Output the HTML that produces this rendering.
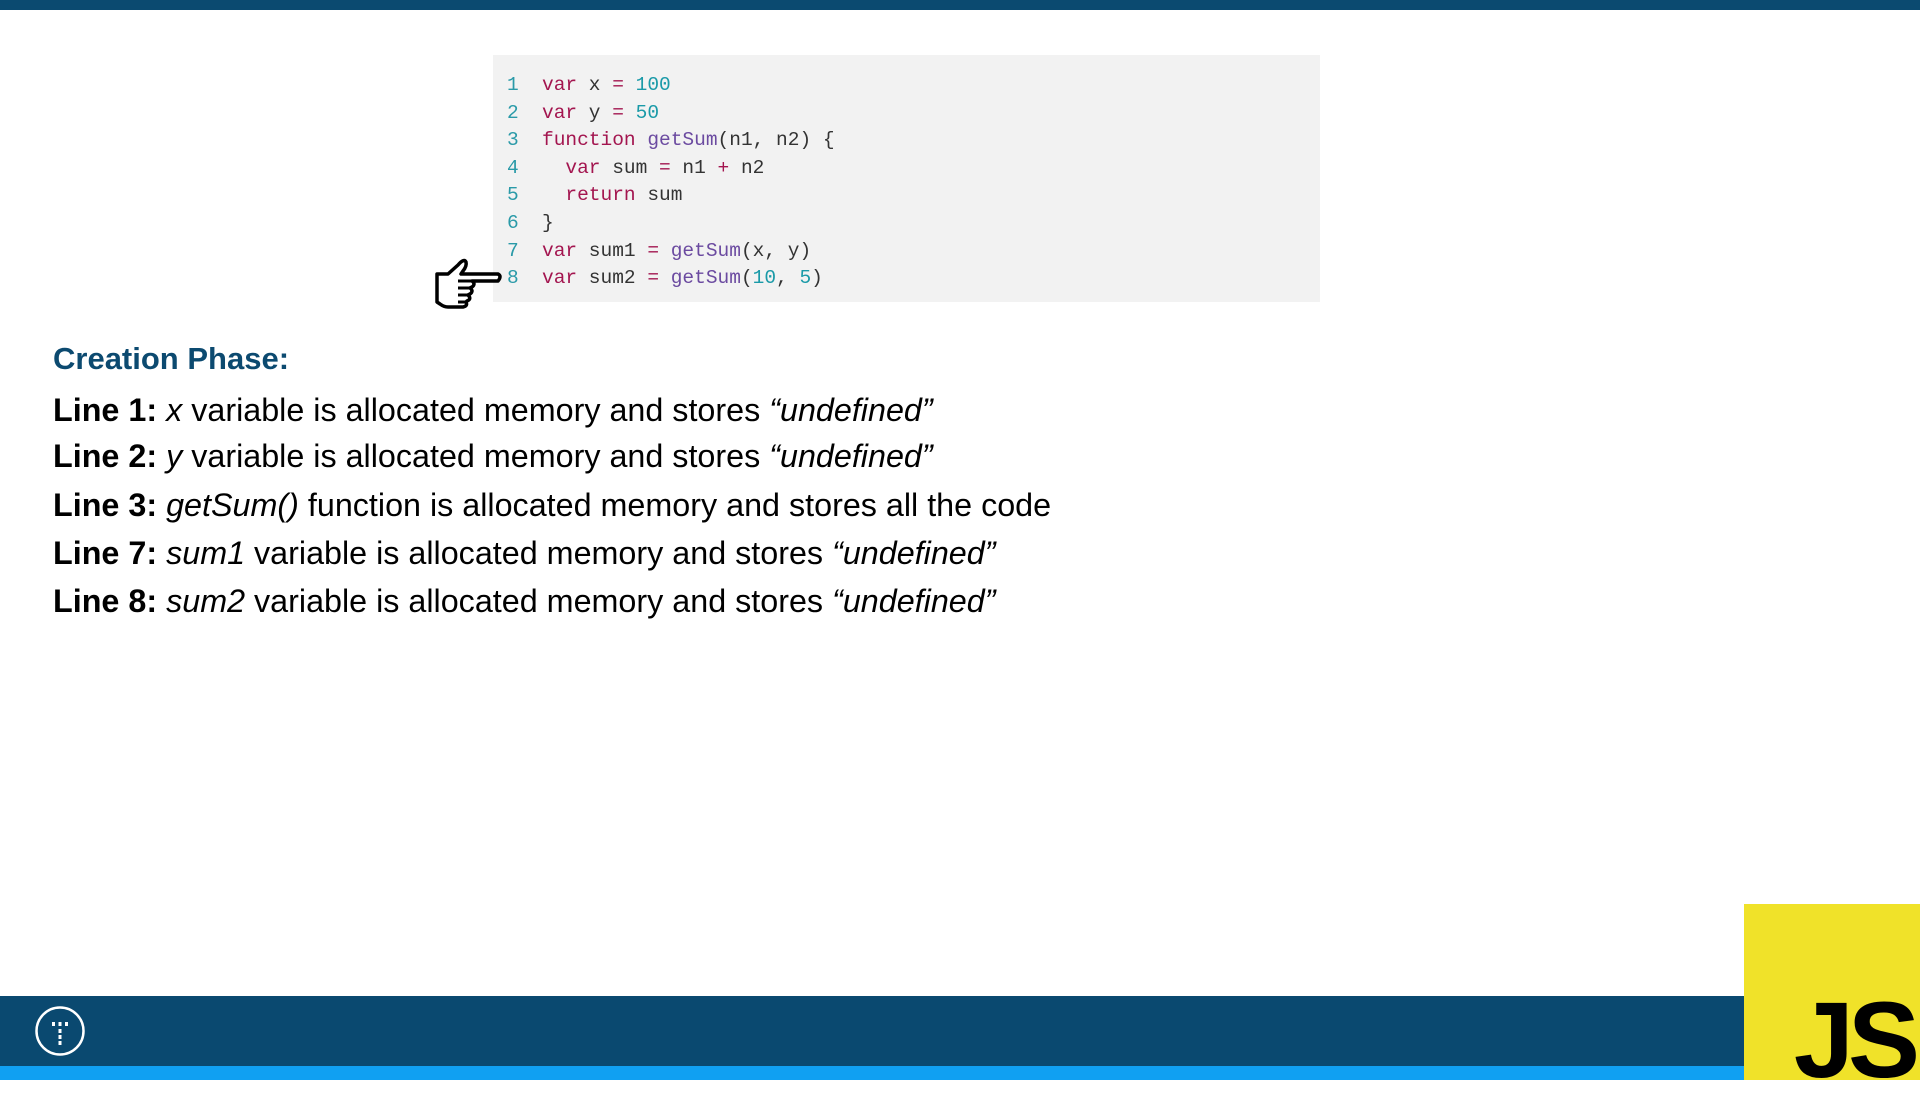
<!DOCTYPE html>
<html><head><meta charset="utf-8"><style>
*{margin:0;padding:0;box-sizing:border-box}
body{width:1920px;height:1080px;background:#fff;position:relative;overflow:hidden;font-family:"Liberation Sans",sans-serif}
.top{position:absolute;left:0;top:0;width:1920px;height:10px;background:#0b4a70}
.code{position:absolute;left:493px;top:55px;width:827px;height:247px;background:#f2f2f2}
.ln{position:absolute;left:14px;font:19.5px/27.6px "Liberation Mono","DejaVu Sans Mono",monospace;color:#2a9aa8}
.cd{position:absolute;left:49px;font:19.5px/27.6px "Liberation Mono","DejaVu Sans Mono",monospace;color:#333;white-space:pre}
.k{color:#a3154f}.n{color:#1a9aa8}.f{color:#6b4aa0}
.t{position:absolute;left:53px;font-size:32.3px;color:#000;white-space:nowrap}
.h{position:absolute;left:53px;top:341px;font-size:31px;font-weight:bold;color:#0c4a70}
.bar{position:absolute;left:0;top:996px;width:1920px;height:70px;background:#0a4970}
.bar2{position:absolute;left:0;top:1066px;width:1920px;height:14px;background:#10a0f2}
.js{position:absolute;left:1744px;top:904px;width:176px;height:176px;background:#f0e229}
.js span{position:absolute;right:6px;bottom:-14px;font:bold 108px/1 "Liberation Sans",sans-serif;color:#000;letter-spacing:-6px}
</style></head><body>
<div class="top"></div>
<div class="code">
<div class="ln" style="top:17px">1<br>2<br>3<br>4<br>5<br>6<br>7<br>8</div>
<div class="cd" style="top:17px"><span class="k">var</span> x <span class="k">=</span> <span class="n">100</span>
<span class="k">var</span> y <span class="k">=</span> <span class="n">50</span>
<span class="k">function</span> <span class="f">getSum</span>(n1, n2) {
  <span class="k">var</span> sum <span class="k">=</span> n1 <span class="k">+</span> n2
  <span class="k">return</span> sum
}
<span class="k">var</span> sum1 <span class="k">=</span> <span class="f">getSum</span>(x, y)
<span class="k">var</span> sum2 <span class="k">=</span> <span class="f">getSum</span>(<span class="n">10</span>, <span class="n">5</span>)</div>
</div>
<svg style="position:absolute;left:434px;top:256px" width="70" height="54" viewBox="0 0 70 54">
<path d="M3 18 L14 18 L24 9 Q30 2 32 6 Q33 10 29 15 L27 18 L64 18 Q68 20 64 25 L38 25 Q42 28 38 31 L36 32 Q40 35 36 38 L34 39 Q38 43 33 45 L32 46 Q34 50 29 51 L14 51 Q10 51 6 48 L3 46 Z" fill="#fff" stroke="#000" stroke-width="3.5" stroke-linejoin="round"/>
<path d="M38 25 L24 25 M36 32 L24 32 M34 39 L24 39 M32 46 L24 46" stroke="#000" stroke-width="3" fill="none"/>
</svg>
<div class="h">Creation Phase:</div>
<div class="t" style="top:392px"><b>Line 1:</b> <i>x</i> variable is allocated memory and stores <i>“undefined”</i></div>
<div class="t" style="top:438px"><b>Line 2:</b> <i>y</i> variable is allocated memory and stores <i>“undefined”</i></div>
<div class="t" style="top:487px"><b>Line 3:</b> <i>getSum()</i> function is allocated memory and stores all the code</div>
<div class="t" style="top:535px"><b>Line 7:</b> <i>sum1</i> variable is allocated memory and stores <i>“undefined”</i></div>
<div class="t" style="top:583px"><b>Line 8:</b> <i>sum2</i> variable is allocated memory and stores <i>“undefined”</i></div>
<div class="bar"></div><div class="bar2"></div>
<svg style="position:absolute;left:34px;top:1005px" width="52" height="52" viewBox="0 0 52 52">
<circle cx="26" cy="26" r="23.5" fill="none" stroke="#fff" stroke-width="2.5"/>
<rect x="18" y="17" width="3" height="4" fill="#fff"/><rect x="24.5" y="17" width="3" height="4" fill="#fff"/><rect x="31" y="17" width="3" height="4" fill="#fff"/>
<rect x="24.5" y="24" width="3" height="4" fill="#fff"/><rect x="24.5" y="30" width="3" height="4" fill="#fff"/><rect x="24.5" y="36" width="3" height="4" fill="#fff"/>
</svg>
<div class="js"><span>JS</span></div>
</body></html>
